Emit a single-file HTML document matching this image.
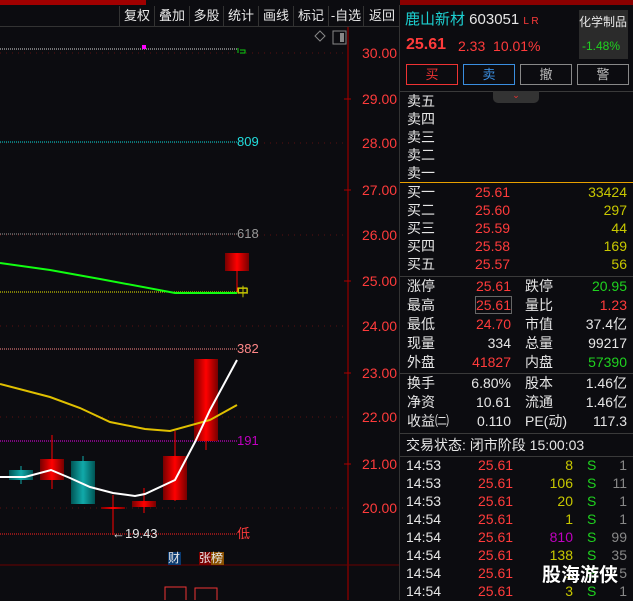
<!DOCTYPE html><html><head><meta charset="utf-8"><style>
*{margin:0;padding:0;box-sizing:border-box}
body{width:633px;height:600px;background:#0c0c10;overflow:hidden;position:relative;font-family:"Liberation Sans","Noto Sans CJK SC",sans-serif;font-size:13px;color:#e0e0e0}
.a{position:absolute;white-space:nowrap;line-height:16px}
.r{color:#ff3b3b}.g{color:#1fd21f}.y{color:#c8c800}.w{color:#e6e6e6}.m{color:#c000c0}.gr{color:#888}
.tb{position:absolute;top:6px;height:20px;line-height:20px;font-size:13px;color:#e8e8e8;border-left:1px solid #333;text-align:center}
.sep{position:absolute;left:400px;width:233px;height:1px;background:#3a3a3a}
.rp{font-size:14px}
.ax{font-size:14px}
</style></head><body>
<div style="position:absolute;left:0;top:0;width:146px;height:5px;background:#a00000"></div>
<div style="position:absolute;left:400px;top:0;width:233px;height:5px;background:#8a0000"></div>
<div style="position:absolute;left:0;top:26px;width:400px;height:1px;background:#333"></div>
<div class="tb" style="left:119px;width:35px">复权</div>
<div class="tb" style="left:154px;width:35px">叠加</div>
<div class="tb" style="left:189px;width:34px">多股</div>
<div class="tb" style="left:223px;width:35px">统计</div>
<div class="tb" style="left:258px;width:35px">画线</div>
<div class="tb" style="left:293px;width:35px">标记</div>
<div class="tb" style="left:328px;width:35px">-自选</div>
<div class="tb" style="left:363px;width:37px">返回</div>
<svg style="position:absolute;left:0;top:0" width="400" height="600">
<line x1="348" y1="27" x2="348" y2="600" stroke="#7a0000" stroke-width="1.5"/>
<line x1="0" y1="565" x2="400" y2="565" stroke="#6a0000"/>
<g stroke="#5a1010" stroke-dasharray="1,5">
<line x1="0" y1="53" x2="346" y2="53"/><line x1="0" y1="143" x2="346" y2="143"/><line x1="0" y1="235" x2="346" y2="235"/><line x1="0" y1="326" x2="346" y2="326"/><line x1="0" y1="417" x2="346" y2="417"/><line x1="0" y1="508" x2="346" y2="508"/></g>
<g stroke="#a00" stroke-width="1"><line x1="344" y1="99" x2="351" y2="99"/><line x1="344" y1="190" x2="351" y2="190"/><line x1="344" y1="281" x2="351" y2="281"/><line x1="344" y1="373" x2="351" y2="373"/><line x1="344" y1="464" x2="351" y2="464"/></g>
<rect x="333" y="31" width="13" height="13" fill="none" stroke="#888"/><rect x="340" y="33" width="4" height="9" fill="#888"/>
<path d="M320 31 L325 36 L320 41 L315 36Z" fill="none" stroke="#888"/>
<line x1="0" y1="49" x2="237" y2="49" stroke="#ddd" stroke-dasharray="1,1"/>
<rect x="142" y="45" width="4" height="4" fill="#f0f"/>
<path d="M238 48v5M240 50h5v3h-5" stroke="#1c1" fill="none"/>
<line x1="0" y1="142" x2="237" y2="142" stroke="#0dd" stroke-dasharray="1,1"/>
<line x1="0" y1="234" x2="237" y2="234" stroke="#999" stroke-dasharray="1,1"/>
<line x1="0" y1="292" x2="237" y2="292" stroke="#ee0" stroke-dasharray="1,1"/>
<line x1="0" y1="349" x2="237" y2="349" stroke="#f88" stroke-dasharray="1,1"/>
<line x1="0" y1="441" x2="237" y2="441" stroke="#e0e" stroke-dasharray="1,1"/>
<line x1="0" y1="534" x2="237" y2="534" stroke="#f22" stroke-dasharray="1,1"/>
<defs><linearGradient id="rg" x1="0" x2="1"><stop offset="0" stop-color="#700"/><stop offset=".5" stop-color="#f00"/><stop offset="1" stop-color="#700"/></linearGradient>
<linearGradient id="tg" x1="0" x2="1"><stop offset="0" stop-color="#055"/><stop offset=".5" stop-color="#1aa"/><stop offset="1" stop-color="#055"/></linearGradient></defs>
<g stroke-width="1"><line x1="21" y1="466" x2="21" y2="484" stroke="#1aa"/><rect x="9" y="470" width="24" height="10" fill="url(#tg)"/>
<line x1="52" y1="435" x2="52" y2="489" stroke="#f00"/><rect x="40" y="459" width="24" height="21" fill="url(#rg)"/>
<line x1="83" y1="456" x2="83" y2="461" stroke="#1aa"/><rect x="71" y="461" width="24" height="43" fill="url(#tg)"/>
<line x1="113" y1="495" x2="113" y2="535" stroke="#f00"/><rect x="101" y="507" width="24" height="2" fill="url(#rg)"/>
<line x1="144" y1="488" x2="144" y2="513" stroke="#f00"/><rect x="132" y="501" width="24" height="6" fill="url(#rg)"/>
<line x1="175" y1="431" x2="175" y2="501" stroke="#f00"/><rect x="163" y="456" width="24" height="44" fill="url(#rg)"/>
<line x1="206" y1="440" x2="206" y2="450" stroke="#f00"/><rect x="194" y="359" width="24" height="82" fill="url(#rg)"/>
<line x1="237" y1="270" x2="237" y2="292" stroke="#f00"/><rect x="225" y="253" width="24" height="18" fill="url(#rg)"/></g>
<rect x="238" y="288" width="9" height="5" fill="none" stroke="#ee0"/><line x1="243" y1="286" x2="243" y2="296" stroke="#aa0"/>
<polyline points="0,263 50,270 100,279 175,293 237,293" fill="none" stroke="#1f1" stroke-width="2"/>
<polyline points="0,384 50,397 80,408 110,422 145,429 170,431 210,420 237,405" fill="none" stroke="#e0c000" stroke-width="2"/>
<polyline points="0,477 25,477 51,470 70,478 90,487 113,493 135,496 145,494 175,480 195,442 210,410 237,360" fill="none" stroke="#fff" stroke-width="2"/>
<rect x="168" y="552" width="13" height="13" fill="#0a3a70"/><rect x="199" y="552" width="12" height="13" fill="#7a0000"/><rect x="211" y="552" width="13" height="13" fill="#8a5000"/>
<rect x="165" y="587" width="21" height="14" fill="none" stroke="#e33"/><rect x="195" y="588" width="22" height="14" fill="none" stroke="#e33"/>
</svg>
<div class="a" style="left:237px;top:134px;color:#2dd">809</div>
<div class="a" style="left:237px;top:226px;color:#999">618</div>
<div class="a" style="left:237px;top:341px;color:#f88">382</div>
<div class="a m" style="left:237px;top:433px">191</div>
<div class="a r" style="left:237px;top:526px">低</div>
<div class="a y" style="left:237px;top:284px;font-size:12px">中</div>
<div class="a w" style="left:112px;top:526px">←19.43</div>
<div class="a w" style="left:168px;top:550px;font-size:12px">财</div>
<div class="a w" style="left:199px;top:550px;font-size:12px">张榜</div>
<div class="ax">
<div class="a r" style="left:362px;top:45px">30.00</div><div class="a r" style="left:362px;top:91px">29.00</div><div class="a r" style="left:362px;top:135px">28.00</div><div class="a r" style="left:362px;top:182px">27.00</div><div class="a r" style="left:362px;top:227px">26.00</div><div class="a r" style="left:362px;top:273px">25.00</div><div class="a r" style="left:362px;top:318px">24.00</div><div class="a r" style="left:362px;top:365px">23.00</div><div class="a r" style="left:362px;top:409px">22.00</div><div class="a r" style="left:362px;top:456px">21.00</div><div class="a r" style="left:362px;top:500px">20.00</div>
</div>
<div style="position:absolute;left:399px;top:5px;width:1px;height:595px;background:#333"></div>
<div class="a" style="left:405px;top:12px;font-size:15px;color:#1ccfd0">鹿山新材 <span class="w">603051</span> <span class="r" style="font-size:10px">L R</span></div>
<div class="a r" style="left:406px;top:37px;font-size:16px;font-weight:bold">25.61</div>
<div class="a r" style="left:458px;top:38px;font-size:14px">2.33&nbsp; 10.01%</div>
<div style="position:absolute;left:579px;top:10px;width:49px;height:49px;background:#2b2b2b"></div>
<div class="a w" style="left:579px;top:14px;font-size:12px">化学制品</div>
<div class="a g" style="left:582px;top:38px;font-size:12px">-1.48%</div>
<div class="a" style="left:406px;top:64px;width:52px;height:21px;border:1px solid #e33;color:#e33;text-align:center;line-height:19px">买</div>
<div class="a" style="left:463px;top:64px;width:52px;height:21px;border:1px solid #3a8ee0;color:#3a8ee0;text-align:center;line-height:19px">卖</div>
<div class="a" style="left:520px;top:64px;width:52px;height:21px;border:1px solid #888;color:#bbb;text-align:center;line-height:19px">撤</div>
<div class="a" style="left:577px;top:64px;width:52px;height:21px;border:1px solid #888;color:#bbb;text-align:center;line-height:19px">警</div>
<div class="sep" style="top:91px"></div>
<div style="position:absolute;left:493px;top:91px;width:46px;height:12px;background:#333;border-radius:0 0 5px 5px;color:#e33;font-size:9px;text-align:center;line-height:9px">⌄</div>
<div class="rp">
<div class="a w" style="left:407px;top:93px">卖五</div><div class="a w" style="left:407px;top:111px">卖四</div><div class="a w" style="left:407px;top:129px">卖三</div><div class="a w" style="left:407px;top:147px">卖二</div><div class="a w" style="left:407px;top:165px">卖一</div>
</div>
<div style="position:absolute;left:400px;top:182px;width:233px;height:1px;background:#e8a000"></div>
<div class="sep" style="top:276px"></div><div class="sep" style="top:373px"></div><div class="sep" style="top:433px"></div><div class="sep" style="top:456px"></div>
<div class="rp" style="position:absolute;left:400px;top:184px;width:233px">
<div style="position:relative;height:18px"><span class="a w" style="left:7px">买一</span><span class="a r" style="left:75px">25.61</span><span class="a y" style="right:6px">33424</span></div>
<div style="position:relative;height:18px"><span class="a w" style="left:7px">买二</span><span class="a r" style="left:75px">25.60</span><span class="a y" style="right:6px">297</span></div>
<div style="position:relative;height:18px"><span class="a w" style="left:7px">买三</span><span class="a r" style="left:75px">25.59</span><span class="a y" style="right:6px">44</span></div>
<div style="position:relative;height:18px"><span class="a w" style="left:7px">买四</span><span class="a r" style="left:75px">25.58</span><span class="a y" style="right:6px">169</span></div>
<div style="position:relative;height:18px"><span class="a w" style="left:7px">买五</span><span class="a r" style="left:75px">25.57</span><span class="a y" style="right:6px">56</span></div>
</div>
<div class="rp" style="position:absolute;left:400px;top:278px;width:233px">
<div style="position:relative;height:19px"><span class="a w" style="left:7px">涨停</span><span class="a r" style="right:122px">25.61</span><span class="a w" style="left:125px">跌停</span><span class="a g" style="right:6px">20.95</span></div>
<div style="position:relative;height:19px"><span class="a w" style="left:7px">最高</span><span class="a r" style="right:122px;outline:1px solid #666">25.61</span><span class="a w" style="left:125px">量比</span><span class="a r" style="right:6px">1.23</span></div>
<div style="position:relative;height:19px"><span class="a w" style="left:7px">最低</span><span class="a r" style="right:122px">24.70</span><span class="a w" style="left:125px">市值</span><span class="a w" style="right:6px">37.4亿</span></div>
<div style="position:relative;height:19px"><span class="a w" style="left:7px">现量</span><span class="a w" style="right:122px">334</span><span class="a w" style="left:125px">总量</span><span class="a w" style="right:6px">99217</span></div>
<div style="position:relative;height:19px"><span class="a w" style="left:7px">外盘</span><span class="a r" style="right:122px">41827</span><span class="a w" style="left:125px">内盘</span><span class="a g" style="right:6px">57390</span></div>
</div>
<div class="rp" style="position:absolute;left:400px;top:375px;width:233px">
<div style="position:relative;height:19px"><span class="a w" style="left:7px">换手</span><span class="a w" style="right:122px">6.80%</span><span class="a w" style="left:125px">股本</span><span class="a w" style="right:6px">1.46亿</span></div>
<div style="position:relative;height:19px"><span class="a w" style="left:7px">净资</span><span class="a w" style="right:122px">10.61</span><span class="a w" style="left:125px">流通</span><span class="a w" style="right:6px">1.46亿</span></div>
<div style="position:relative;height:19px"><span class="a w" style="left:7px">收益㈡</span><span class="a w" style="right:122px">0.110</span><span class="a w" style="left:125px">PE(动)</span><span class="a w" style="right:6px">117.3</span></div>
</div>
<div class="a w rp" style="left:406px;top:437px">交易状态: 闭市阶段 15:00:03</div>
<div class="rp" style="position:absolute;left:400px;top:457px;width:233px">
<div style="position:relative;height:18px"><span class="a w" style="left:6px">14:53</span><span class="a r" style="left:78px">25.61</span><span class="a y" style="right:60px">8</span><span class="a g" style="left:187px">S</span><span class="a gr" style="right:6px">1</span></div>
<div style="position:relative;height:18px"><span class="a w" style="left:6px">14:53</span><span class="a r" style="left:78px">25.61</span><span class="a y" style="right:60px">106</span><span class="a g" style="left:187px">S</span><span class="a gr" style="right:6px">11</span></div>
<div style="position:relative;height:18px"><span class="a w" style="left:6px">14:53</span><span class="a r" style="left:78px">25.61</span><span class="a y" style="right:60px">20</span><span class="a g" style="left:187px">S</span><span class="a gr" style="right:6px">1</span></div>
<div style="position:relative;height:18px"><span class="a w" style="left:6px">14:54</span><span class="a r" style="left:78px">25.61</span><span class="a y" style="right:60px">1</span><span class="a g" style="left:187px">S</span><span class="a gr" style="right:6px">1</span></div>
<div style="position:relative;height:18px"><span class="a w" style="left:6px">14:54</span><span class="a r" style="left:78px">25.61</span><span class="a m" style="right:60px">810</span><span class="a g" style="left:187px">S</span><span class="a gr" style="right:6px">99</span></div>
<div style="position:relative;height:18px"><span class="a w" style="left:6px">14:54</span><span class="a r" style="left:78px">25.61</span><span class="a y" style="right:60px">138</span><span class="a g" style="left:187px">S</span><span class="a gr" style="right:6px">35</span></div>
<div style="position:relative;height:18px"><span class="a w" style="left:6px">14:54</span><span class="a r" style="left:78px">25.61</span><span class="a y" style="right:60px">1</span><span class="a g" style="left:187px">S</span><span class="a gr" style="right:6px">5</span></div>
<div style="position:relative;height:18px"><span class="a w" style="left:6px">14:54</span><span class="a r" style="left:78px">25.61</span><span class="a y" style="right:60px">3</span><span class="a g" style="left:187px">S</span><span class="a gr" style="right:6px">1</span></div>
</div>
<div class="a" style="left:542px;top:565px;font-size:19px;line-height:22px;color:#fff;font-weight:bold;text-shadow:0 0 2px #000">股海游侠</div>
</body></html>
